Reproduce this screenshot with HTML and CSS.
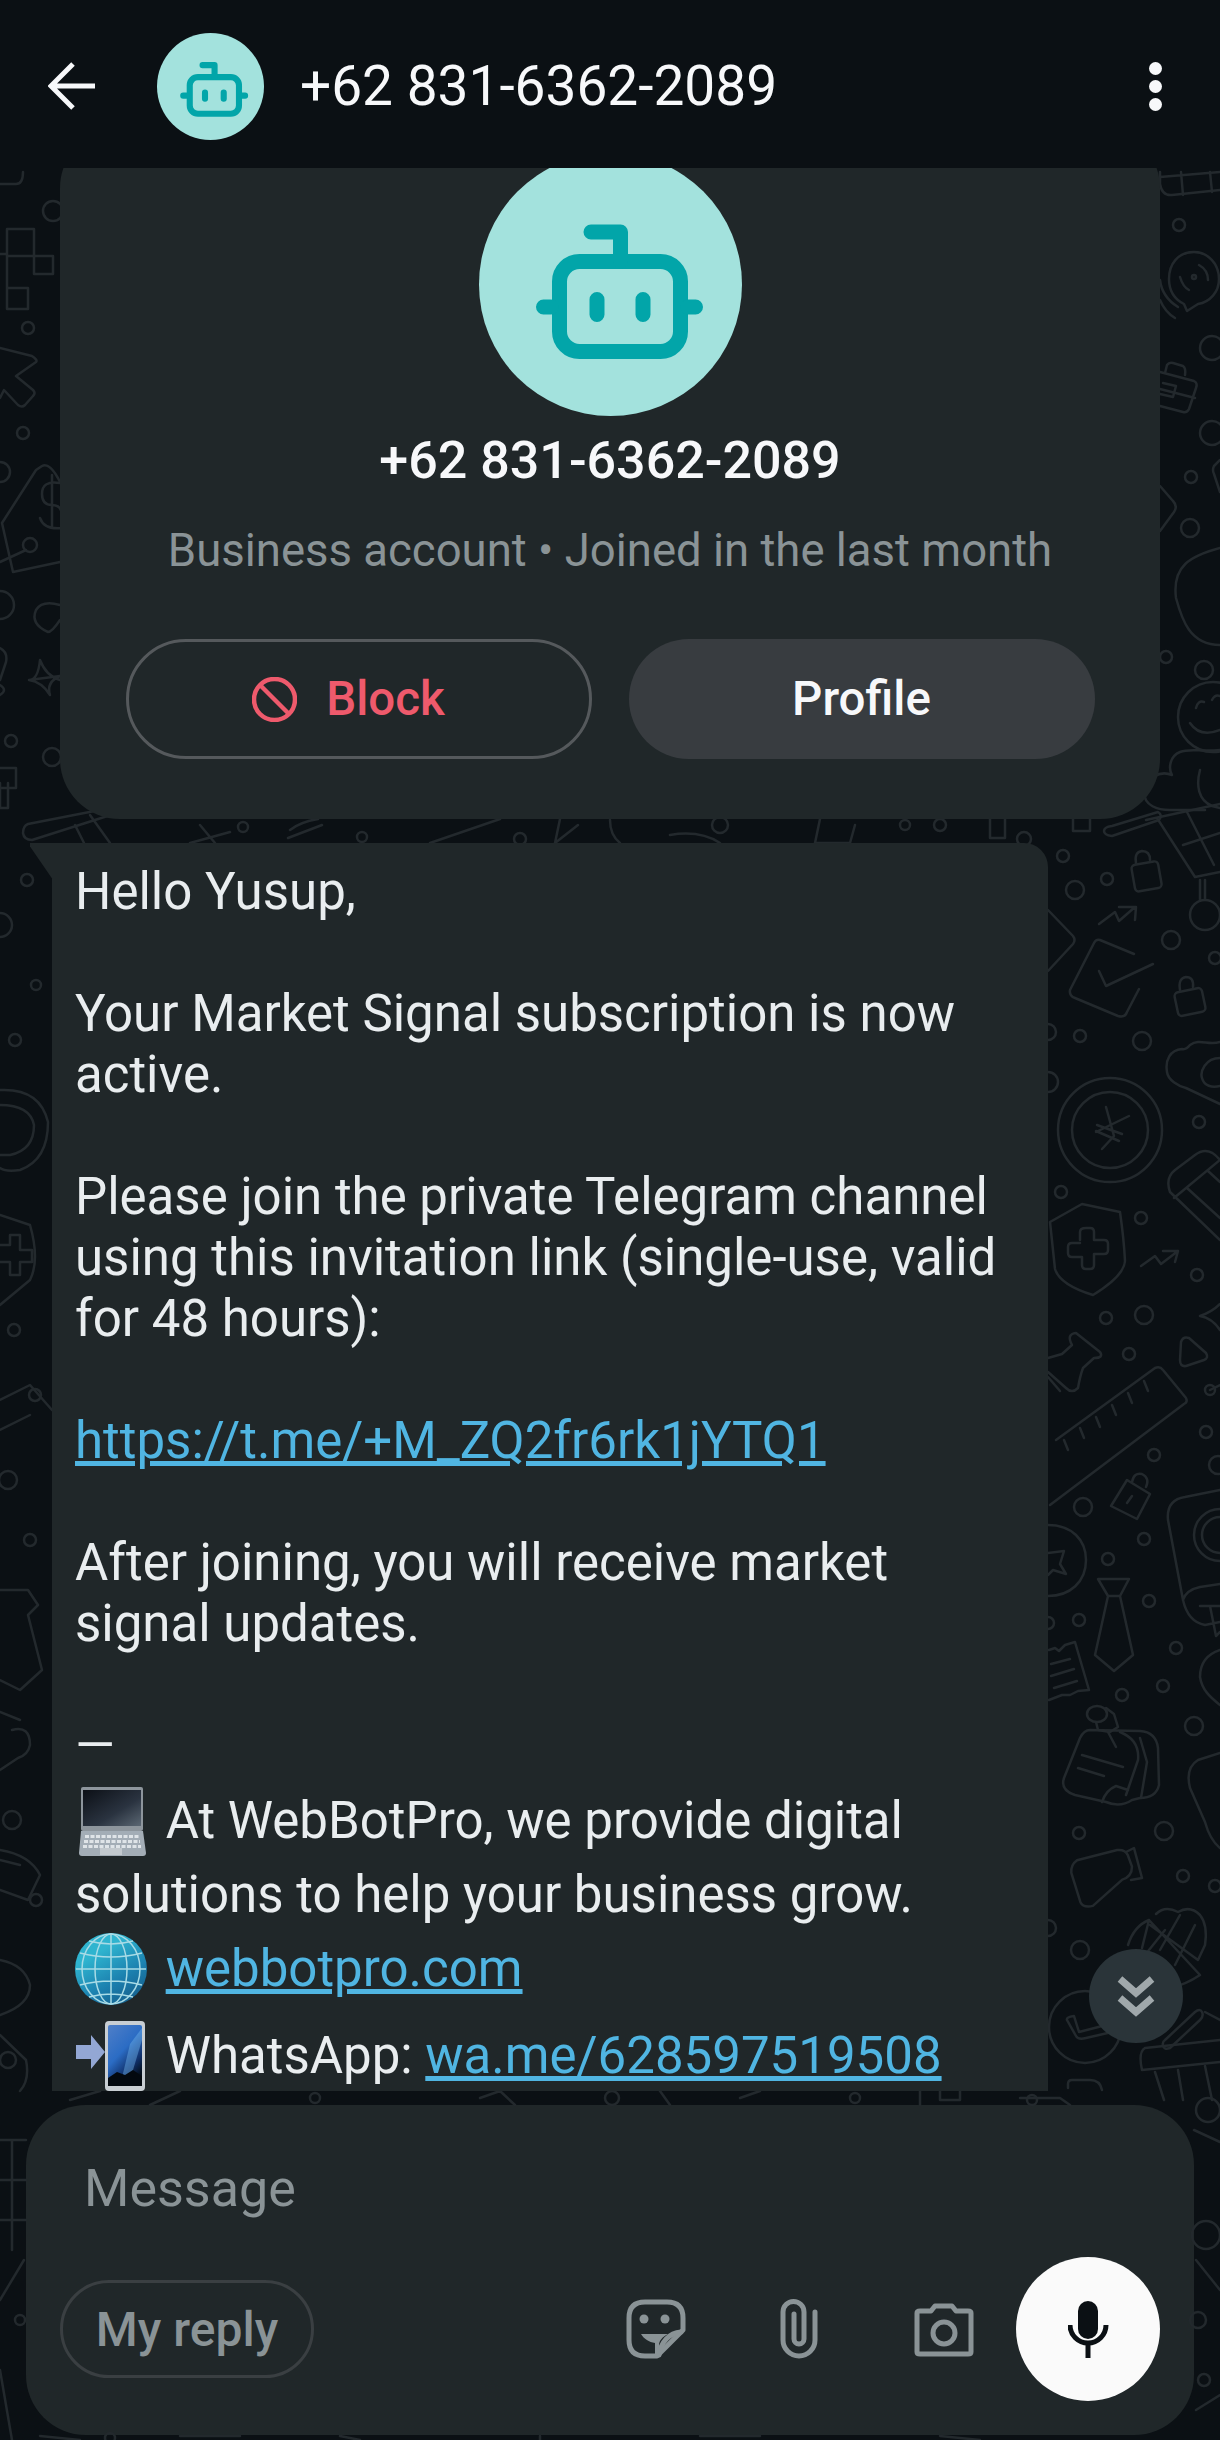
FILE: index.html
```html
<!DOCTYPE html>
<html>
<head>
	<title>Chat</title>
	<link rel="stylesheet" href="styles.css">
</head>
<body>
	<svg class="defs" width="0" height="0">
		<symbol id="robot" viewBox="0 0 263 263">
			<circle cx="131.5" cy="131.5" r="131.5" fill="#a3e2dd"/>
			<g fill="none" stroke="#02a5a9" stroke-width="15" stroke-linecap="round" stroke-linejoin="round">
				<rect x="80.5" y="108.5" width="121" height="90" rx="20"/>
				<path d="M112 79H141.5V108M64.5 154H72M209 154H216.5M118 146.5V161.5M164 146.5V161.5"/>
			</g>
		</symbol>
		<linearGradient id="globe-fill" x1="0.35" y1="0.25" x2="0.8" y2="1">
			<stop offset="0" stop-color="#2fb4cf"/>
			<stop offset="0.55" stop-color="#1b7fae"/>
			<stop offset="1" stop-color="#155d8a"/>
		</linearGradient>
		<linearGradient id="screen-fill" x1="0" y1="0" x2="1" y2="1">
			<stop offset="0" stop-color="#0c1016"/>
			<stop offset="0.6" stop-color="#2a3340"/>
			<stop offset="1" stop-color="#5b6773"/>
		</linearGradient>
		<linearGradient id="phone-fill" x1="0" y1="0" x2="0.6" y2="1">
			<stop offset="0" stop-color="#4f7fc8"/>
			<stop offset="0.5" stop-color="#2b6cc4"/>
			<stop offset="0.8" stop-color="#10306a"/>
			<stop offset="1" stop-color="#04101e"/>
		</linearGradient>
	</svg>

	<!-- wallpaper doodles -->
	<svg class="wallpaper" width="1220" height="2440" viewBox="0 0 1220 2440">
		<g class="dots">
			<circle cx="1179" cy="225" r="6"/><circle cx="1212" cy="348" r="12"/><circle cx="1212" cy="433" r="12"/>
			<circle cx="1191" cy="477" r="6"/><circle cx="1190" cy="528" r="9"/><circle cx="1166" cy="657" r="6"/>
			<circle cx="1204" cy="670" r="9"/><circle cx="1063" cy="856" r="6"/><circle cx="1107" cy="879" r="6"/>
			<circle cx="1075" cy="890" r="9"/><circle cx="1171" cy="940" r="9"/><circle cx="1215" cy="958" r="6"/>
			<circle cx="1080" cy="1036" r="6"/><circle cx="1142" cy="1041" r="9"/><circle cx="1048" cy="1032" r="8"/>
			<circle cx="1048" cy="1082" r="10"/><circle cx="1199" cy="1122" r="6"/><circle cx="1061" cy="1192" r="6"/>
			<circle cx="1141" cy="1218" r="6"/><circle cx="1197" cy="1275" r="6"/><circle cx="1106" cy="1318" r="6"/>
			<circle cx="1144" cy="1315" r="9"/><circle cx="1129" cy="1354" r="6"/><circle cx="1210" cy="1390" r="5"/>
			<circle cx="1206" cy="1432" r="6"/><circle cx="1154" cy="1455" r="6"/><circle cx="1083" cy="1507" r="9"/>
			<circle cx="1144" cy="1539" r="6"/><circle cx="1108" cy="1559" r="6"/><circle cx="1149" cy="1601" r="6"/>
			<circle cx="1079" cy="1620" r="6"/><circle cx="1048" cy="1623" r="6"/><circle cx="1176" cy="1648" r="6"/>
			<circle cx="1163" cy="1686" r="6"/><circle cx="1122" cy="1695" r="6"/><circle cx="1194" cy="1726" r="9"/>
			<circle cx="1079" cy="1833" r="6"/><circle cx="1164" cy="1831" r="9"/><circle cx="1183" cy="1876" r="6"/>
			<circle cx="1215" cy="1886" r="6"/><circle cx="1080" cy="1950" r="9"/><circle cx="1218" cy="1465" r="9"/>
			<circle cx="1048" cy="1928" r="8"/>
			<circle cx="28" cy="328" r="6"/><circle cx="23" cy="433" r="6"/><circle cx="0" cy="472" r="10"/>
			<circle cx="30" cy="545" r="7"/><circle cx="0" cy="605" r="14"/><circle cx="11" cy="741" r="6"/>
			<circle cx="52" cy="757" r="9"/><circle cx="53" cy="211" r="10"/><circle cx="27" cy="880" r="6"/>
			<circle cx="0" cy="925" r="12"/><circle cx="36" cy="985" r="5"/><circle cx="15" cy="1040" r="6"/>
			<circle cx="14" cy="1330" r="6"/><circle cx="35" cy="1395" r="6"/><circle cx="8" cy="1480" r="9"/>
			<circle cx="30" cy="1540" r="6"/><circle cx="12" cy="1820" r="9"/><circle cx="36" cy="1900" r="6"/>
			<circle cx="8" cy="2060" r="8"/><circle cx="243" cy="827" r="5"/><circle cx="362" cy="837" r="5"/>
			<circle cx="520" cy="839" r="6"/><circle cx="905" cy="825" r="5"/><circle cx="940" cy="825" r="6"/>
			<circle cx="720" cy="825" r="8"/><circle cx="1024" cy="839" r="7"/><circle cx="315" cy="2098" r="5"/>
			<circle cx="612" cy="2098" r="7"/><circle cx="855" cy="2098" r="5"/><circle cx="1032" cy="2100" r="5"/>
			<circle cx="20" cy="2320" r="5"/><circle cx="1208" cy="2110" r="12"/><circle cx="1198" cy="2320" r="8"/>
			<circle cx="1206" cy="2235" r="14"/><circle cx="1204" cy="2380" r="6"/><circle cx="110" cy="2438" r="5"/>
		</g>
		<g class="lines">
			<!-- right side, top -->
			<path d="M1160 172V184Q1162 196 1172 195L1220 190M1160 177L1220 172M1181 172L1183 195M1210 172L1212 192"/>
			<path d="M1194 252C1178 252 1169 264 1169 279C1169 292 1176 300 1184 304L1187 311L1198 304C1210 302 1219 292 1219 279C1219 264 1208 252 1194 252Z"/>
			<path d="M1180 277Q1183 287 1189 290M1199 265Q1208 270 1208 280"/><circle cx="1194" cy="277" r="2"/>
			<path d="M1160 280Q1162 297 1178 307M1160 300Q1165 312 1175 318"/>
			<path d="M1160 372L1194 381Q1198 383 1196 388L1189 409Q1187 413 1183 412L1160 406M1165 373L1167 365Q1169 362 1173 363L1183 366Q1186 368 1185 375M1160 389L1195 398"/>
			<path d="M1163 383L1176 386L1173 397L1160 394"/>
			<path d="M1160 486L1173 501Q1178 506 1174 512L1160 531"/>
			<path d="M1220 460L1214 466Q1212 470 1214 474L1220 492"/>
			<path d="M1220 548C1190 556 1172 566 1176 598C1182 620 1190 645 1220 645"/>
			<circle cx="1213" cy="717" r="35"/>
			<path d="M1190 723Q1200 738 1220 730M1196 708Q1198 700 1204 702M1212 700Q1215 694 1220 696"/>
			<path d="M1220 750C1200 752 1190 748 1180 752C1170 756 1168 768 1172 775C1160 770 1145 778 1144 792C1144 806 1158 810 1170 810H1205M1200 770C1196 785 1198 800 1212 806L1220 808"/>
			<!-- cart and capsule -->
			<path d="M1112 826L1158 812Q1163 815 1159 820L1112 836Q1104 835 1104 831Q1104 827 1112 826Z"/>
			<path d="M1157 818L1195 877L1220 872M1183 845L1220 833M1187 812L1214 865M1146 820L1220 804"/>
			<path d="M1200 880V900M1205 880V900"/><circle cx="1205" cy="915" r="15"/>
			<path d="M1073 818V831H1090V818"/>
			<rect x="1133" y="863" width="27" height="27" rx="4" transform="rotate(-10 1146 876)"/>
			<path d="M1136 863Q1134 852 1142 851Q1150 851 1150 860"/>
			<path d="M1099 924L1115 912L1119 921L1135 907M1119 907H1136L1135 920"/>
			<path d="M1134 954L1100 940Q1096 939 1094 943L1070 990Q1069 996 1075 998L1118 1016Q1125 1018 1127 1012L1139 989"/>
			<path d="M1099 971L1106 986L1153 964"/>
			<path d="M1048 910L1073 936Q1076 940 1073 944L1048 971"/>
			<rect x="1176" y="990" width="28" height="24" rx="4" transform="rotate(-12 1190 1002)"/>
			<path d="M1180 990Q1178 978 1186 977Q1194 977 1193 987"/>
			<path d="M1220 1042C1208 1046 1200 1038 1190 1045Q1186 1050 1182 1049C1170 1050 1165 1060 1167 1072C1168 1080 1178 1086 1186 1088L1220 1104"/>
			<path d="M1220 1058C1205 1058 1200 1072 1202 1078C1204 1086 1212 1088 1220 1086"/>
			<circle cx="1110" cy="1130" r="52"/><circle cx="1110" cy="1130" r="38"/>
			<path d="M1106 1107L1114 1136L1102 1149M1129 1116L1096 1132M1097 1125L1122 1134M1096 1131L1119 1141"/>
			<path d="M1220 1160Q1208 1145 1195 1155L1175 1170Q1165 1178 1170 1192L1220 1240M1174 1198L1220 1160M1187 1188L1220 1218M1208 1171L1220 1182"/>
			<path d="M1050 1222L1082 1204L1120 1212Q1124 1240 1125 1261Q1124 1276 1093 1295Q1060 1285 1055 1269Z"/>
			<path d="M1080 1240V1232Q1080 1228 1086 1228H1090Q1094 1228 1094 1232V1240H1104Q1108 1240 1108 1244V1250Q1108 1254 1104 1254H1094V1265Q1094 1269 1090 1269H1086Q1082 1269 1082 1265V1257H1072Q1068 1257 1068 1253V1247Q1068 1243 1072 1243H1080"/>
			<path d="M1141 1266L1155 1256L1161 1264L1178 1251M1163 1251H1178L1175 1262"/>
			<path d="M1220 1304Q1212 1312 1200 1316Q1212 1318 1220 1330"/>
			<path d="M1181 1342Q1183 1336 1189 1338L1206 1353Q1209 1358 1204 1360L1186 1366Q1180 1367 1180 1360Z"/>
			<path d="M1210 1390L1220 1385"/>
			<path d="M1048 1358L1062 1354L1072 1345Q1066 1334 1076 1333L1100 1352Q1104 1358 1094 1358L1083 1368Q1080 1376 1078 1388Q1072 1394 1066 1388L1048 1372M1048 1377L1060 1391"/>
			<path d="M1056 1440L1155 1368Q1160 1366 1163 1370L1186 1398Q1188 1402 1184 1404L1050 1505M1064 1440L1068 1450M1080 1428L1084 1438M1096 1417L1100 1427M1112 1405L1116 1415M1128 1393L1132 1403M1144 1381L1148 1391"/>
			<!-- right side, lower -->
			<path d="M1111 1506L1127 1480L1150 1494L1137 1519Z"/><path d="M1132 1482Q1134 1472 1142 1474Q1150 1478 1146 1487M1127 1503L1132 1496"/>
			<path d="M1220 1490L1185 1497Q1166 1500 1168 1520L1183 1600Q1188 1622 1205 1625L1220 1622M1183 1600Q1186 1590 1200 1587L1220 1584M1200 1606H1220M1210 1606L1216 1636L1220 1632"/>
			<circle cx="1220" cy="1535" r="26"/><circle cx="1220" cy="1535" r="18"/>
			<path d="M1048 1525C1072 1525 1086 1540 1086 1560C1086 1582 1070 1596 1048 1596"/>
			<path d="M1048 1553L1064 1551L1060 1564L1066 1574L1053 1570L1048 1575"/>
			<path d="M1098 1579H1129L1120 1596H1108ZM1108 1596L1095 1655L1114 1671L1133 1655L1120 1596"/>
			<path d="M1049 1650L1055 1648L1059 1651L1065 1645L1075 1642L1089 1690L1078 1691L1070 1695L1062 1695L1049 1700M1051 1664L1070 1659M1051 1676L1074 1669M1054 1688L1077 1681"/>
			<path d="M1220 1650C1205 1655 1200 1665 1200 1677C1202 1690 1210 1697 1220 1705"/>
			<path d="M1220 1753L1198 1760Q1185 1768 1190 1788L1205 1822Q1210 1840 1220 1848"/>
			<path d="M1090 1730L1140 1731Q1156 1732 1158 1748L1159 1785Q1156 1798 1140 1798L1132 1800Q1120 1808 1106 1802L1075 1795Q1060 1790 1064 1778L1080 1738Q1084 1730 1090 1730Z"/>
			<path d="M1120 1732Q1140 1740 1138 1760L1126 1795M1140 1738L1147 1762L1141 1798M1082 1755L1123 1767M1078 1768L1104 1776M1102 1802Q1106 1790 1116 1786L1128 1790"/>
			<ellipse cx="1097" cy="1714" rx="10" ry="8"/><path d="M1096 1722L1098 1730L1110 1732L1118 1727L1114 1714L1106 1708"/>
			<path d="M1108 1732L1116 1747"/>
			<path d="M1079 1858L1120 1852Q1128 1852 1130 1858L1133 1870Q1132 1880 1122 1882L1090 1905Q1080 1906 1078 1900L1072 1870Q1072 1862 1079 1858Z" transform="rotate(-6 1100 1878)"/>
			<path d="M1126 1852L1134 1848L1142 1878L1131 1880"/>
			<path d="M1128 1945Q1134 1926 1149 1920L1200 1975Q1185 1985 1170 1988M1149 1920L1142 1948M1156 1914Q1165 1905 1178 1912Q1190 1905 1200 1915Q1208 1925 1205 1945L1198 1960L1150 1925M1165 1930L1145 1955M1180 1915L1160 1950M1195 1925L1175 1965"/>
			<circle cx="1085" cy="2027" r="36"/><path d="M1067 2020Q1066 2017 1074 2016L1079 2032L1110 2024M1067 2020L1076 2036Q1078 2040 1086 2038L1112 2032"/>
			<path d="M1165 2040L1195 2012Q1200 2008 1202 2012Q1204 2016 1200 2020L1170 2048Q1164 2050 1163 2046Q1162 2042 1165 2040ZM1205 2012L1220 2020"/>
			<path d="M1145 2048L1220 2040M1142 2070Q1138 2052 1145 2048M1142 2070L1220 2062M1155 2072L1164 2100M1178 2070L1183 2100M1205 2066L1212 2100"/>
			<path d="M1068 2088V2084Q1068 2080 1072 2080H1090Q1100 2080 1102 2090"/>
			<!-- left side, top -->
			<path d="M0 184H16Q23 184 23 172"/>
			<path d="M7 229H34V256H53V274H34V256H7ZM7 288H28V309H7ZM7 256V288M0 254H7"/>
			<path d="M0 348L32 356Q38 360 36 362L16 376L33 390Q36 393 33 396L25 405Q22 408 18 405L4 390L0 398"/>
			<path d="M60 482Q50 462 42 466L36 470L2 523L13 572L60 562"/>
			<path d="M60 483Q42 480 42 494Q42 505 52 505Q62 505 62 516M62 528Q44 530 40 518M52 475V528"/>
			<path d="M26 550L0 562"/>
			<path d="M60 620Q52 632 48 632Q30 624 36 610Q42 600 60 605"/>
			<path d="M29 680Q38 680 40 660Q46 676 60 680M60 676Q46 682 50 695Q42 682 29 680Z"/>
			<path d="M0 648Q8 652 6 662L0 680M0 685Q8 690 0 695"/>
			<path d="M0 768H16V788H0"/>
			<!-- band and capsule -->
			<path d="M28 824L110 808Q118 806 117 813L32 840Q24 840 23 833Q23 826 28 824ZM90 815L110 843M75 825L84 843"/>
			<path d="M0 783V808H8V783M230 832L190 843M200 825L215 843M290 830Q300 822 318 819M288 838L322 825"/>
			<path d="M430 843L500 819M560 819L555 843L578 825M610 820Q610 835 620 843M670 835Q700 830 720 843M820 819L815 843H850L855 825M990 819V838H1005V819"/>
			<path d="M1020 2098H1060L1070 2105M70 2100L100 2091M150 2105L180 2091M480 2098L500 2091L515 2105M660 2091L670 2105M740 2098L760 2091M920 2105V2091M940 2091V2100H960V2091"/>
			<!-- left side, lower -->
			<path d="M0 1090Q40 1088 48 1122Q48 1160 20 1170Q5 1172 0 1168M0 1105Q30 1105 34 1125Q34 1150 10 1155H0"/>
			<path d="M0 1215L30 1225Q40 1260 30 1280L0 1305M0 1245H10V1235H20V1250H32V1262H20V1275H10V1262H0"/>
			<path d="M0 1400L30 1385L52 1410M0 1430L30 1415"/>
			<path d="M0 1590H28L38 1605L28 1615L42 1670L20 1690L0 1680"/>
			<path d="M12 1730Q30 1725 30 1745Q28 1755 18 1758L0 1770M0 1712L20 1720"/>
			<path d="M0 1850Q30 1855 40 1875L28 1900L0 1890M0 1860L20 1865"/>
			<path d="M0 1960Q25 1965 30 1985Q30 2005 0 2015M0 2035L26 2060Q30 2080 20 2091"/>
			<!-- around the composer -->
			<path d="M0 2140H26M12 2140V2250M0 2180H26M0 2220H26M0 2300L24 2260M0 2370L12 2440"/>
			<path d="M1194 2130L1220 2142M1196 2260L1220 2290M1196 2410L1220 2395M40 2436L80 2440M180 2436H240M340 2436L360 2440M540 2436V2440M700 2436H760M940 2436L980 2440"/>
		</g>
	</svg>

	<div class="header">
		<svg class="back" viewBox="0 0 48 48">
			<path d="M2 24H47M25 2L3 24L25 46"/>
		</svg>
		<svg class="header-avatar"><use href="#robot"/></svg>
		<div class="header-name">+62 831-6362-2089</div>
		<div class="menu">
			<span></span>
			<span></span>
			<span></span>
		</div>
	</div>

	<div class="chat">
		<div class="card">
			<svg class="card-avatar"><use href="#robot"/></svg>
			<div class="card-name">+62 831-6362-2089</div>
			<div class="card-sub">Business account • Joined in the last month</div>
			<div class="card-buttons">
				<div class="btn btn-block">
					<svg width="45" height="45" viewBox="0 0 45 45">
						<circle cx="22.5" cy="22.5" r="20.5"/>
						<path d="M8 8L37 37"/>
					</svg>
					Block
				</div>
				<div class="btn btn-profile">Profile</div>
			</div>
		</div>

		<div class="bubble">
			<p>Hello Yusup,</p>
			<p>Your Market Signal subscription is now active.</p>
			<p>Please join the private Telegram channel using this invitation link (single-use, valid for 48 hours):</p>
			<p><a href="#">https://t.me/+M_ZQ2fr6rk1jYTQ1</a></p>
			<p>After joining, you will receive market signal updates.</p>
			<p>—</p>
			<div class="promo">
				<svg class="emoji" width="72" height="72" viewBox="0 0 72 72">
					<rect x="6" y="2" width="62" height="44" rx="2" fill="#8d959c"/>
					<rect x="8" y="5" width="58" height="36" fill="url(#screen-fill)"/>
					<path d="M6 46H68L71 68Q71 71 68 71H7Q4 71 4 68Z" fill="#a3adb6"/>
					<g fill="none" stroke="#dfe4e8" stroke-width="3" stroke-dasharray="4 1.5">
						<path d="M10 51.5H64M9 56.5H65M8 61.5H66"/>
					</g>
					<rect x="25" y="63" width="22" height="7" fill="#c3c9ce"/>
				</svg>
				At WebBotPro, we provide digital solutions to help your business grow.
			</div>
			<div class="promo">
				<svg class="emoji" width="72" height="72" viewBox="0 0 72 72">
					<circle cx="36" cy="36" r="36" fill="url(#globe-fill)"/>
					<g fill="none" stroke="#a8dbe6" stroke-width="1.5">
						<ellipse cx="36" cy="36" rx="16" ry="35"/>
						<ellipse cx="36" cy="36" rx="29" ry="35"/>
						<path d="M36 1V71M1 36H71M5 20Q36 28 67 20M5 52Q36 44 67 52M14 8Q36 14 58 8M14 64Q36 58 58 64"/>
					</g>
				</svg>
				<a href="#">webbotpro.com</a>
			</div>
			<div class="promo promo-last">
				<svg class="emoji" width="72" height="72" viewBox="0 0 72 72">
					<path d="M1 25H16V15L30 32L16 49V39H1Z" fill="#93a7d4"/>
					<rect x="30" y="1" width="40" height="70" rx="4" fill="#c8ced3"/>
					<rect x="33" y="5" width="34" height="61" rx="2" fill="url(#phone-fill)"/>
					<path d="M45 66L55 24L67 8V20L58 50L50 66Z" fill="#6fb2e8" opacity="0.45"/>
					<path d="M33 58L42 52L50 55L58 50L67 56V66H33Z" fill="#03090f"/>
				</svg>
				WhatsApp: <a href="#">wa.me/628597519508</a>
			</div>
		</div>
	</div>

	<div class="composer">
		<div class="composer-input">Message</div>
		<div class="composer-row">
			<div class="reply-chip">My reply</div>
			<div class="composer-icons">
				<svg class="icon icon-sticker" viewBox="0 0 60 60">
					<path d="M19 3H41Q57 3 57 19V31L31 57H19Q3 57 3 41V19Q3 3 19 3Z"/>
					<circle class="solid" cx="18" cy="20" r="4.5"/>
					<circle class="solid" cx="39" cy="20" r="4.5"/>
					<path class="solid" d="M15 35L42 35C36 38 33 42 33 46V56H29V44C23 43 18 40 15 35Z"/>
					<path d="M55 33C43 34 35 43 33 56"/>
				</svg>
				<svg class="icon icon-clip" viewBox="0 0 38 60">
					<path d="M35 13V41A16 16 0 0 1 3 41V13A10.5 10.5 0 0 1 24 13V40A5 5 0 0 1 14 40V15"/>
				</svg>
				<svg class="icon icon-camera" viewBox="0 0 60 55">
					<path d="M3 11Q3 9 6 9H17L21 4H38L42 9H54Q57 9 57 11V50Q57 52 54 52H6Q3 52 3 50Z"/>
					<circle cx="30" cy="31" r="11"/>
				</svg>
				<div class="mic">
					<svg width="41" height="57" viewBox="0 0 41 57">
						<rect x="10" y="0" width="20" height="38" rx="10"/>
						<path d="M2 24A18 18 0 0 0 38 24" fill="none" stroke="#0b1014" stroke-width="5"/>
						<rect x="17.5" y="40" width="5" height="17"/>
					</svg>
				</div>
			</div>
		</div>
	</div>

	<div class="scroll-down">
		<svg width="40" height="42" viewBox="0 0 40 42">
			<path d="M4 4L20 18L36 4M4 23L20 37L36 23"/>
		</svg>
	</div>
</body>
</html>
```

FILE: styles.css
```css
* {
	box-sizing: border-box;
}

html,
body {
	margin: 0;
	height: 2440px;
	overflow: hidden;
}

body {
	position: relative;
	background-color: #0b1014;
	font-family: Roboto, "Noto Sans", sans-serif;
	color: #e9edef;
}

.defs {
	position: absolute;
}

.wallpaper {
	position: absolute;
	top: 0;
	left: 0;
}

.wallpaper g {
	fill: none;
	stroke: #23292d;
	stroke-width: 2.5;
	stroke-linecap: round;
	stroke-linejoin: round;
}

/* header */

.header {
	position: relative;
	display: flex;
	align-items: center;
	height: 168px;
	padding: 4px 58px 0 48px;
	background-color: #0b1014;
}

.back {
	width: 48px;
	height: 48px;
	fill: none;
	stroke: #f7f8fa;
	stroke-width: 5;
}

.header-avatar {
	width: 107px;
	height: 107px;
	margin-left: 61px;
}

.header-name {
	flex: 1;
	margin-left: 36px;
	font-size: 55px;
	color: #f7f8fa;
}

.menu {
	display: flex;
	flex-direction: column;
	gap: 5px;
}

.menu span {
	width: 13px;
	height: 13px;
	border-radius: 50%;
	background-color: #f7f8fa;
}

/* chat area */

.chat {
	position: relative;
	height: 1923px;
	overflow: hidden;
}

.card {
	display: flex;
	flex-direction: column;
	align-items: center;
	width: 1100px;
	height: 691px;
	margin: -40px 0 24px 60px;
	padding-top: 25px;
	border-radius: 60px;
	background-color: #202729;
}

.card-avatar {
	width: 263px;
	height: 263px;
}

.card-name {
	margin-top: 13px;
	font-size: 52px;
	line-height: 64px;
	font-weight: 500;
	color: #f7f8fa;
}

.card-sub {
	margin-top: 32px;
	font-size: 45.5px;
	line-height: 52px;
	color: #8a9396;
}

.card-buttons {
	display: flex;
	gap: 37px;
	margin-top: 62px;
}

.btn {
	display: flex;
	justify-content: center;
	align-items: center;
	gap: 29px;
	width: 466px;
	height: 120px;
	border-radius: 60px;
	font-size: 47.5px;
	font-weight: 500;
}

.btn-block {
	padding-right: 20px;
	border: 3px solid #55595c;
	color: #ee5a6c;
}

.btn-block svg {
	fill: none;
	stroke: #ee5a6c;
	stroke-width: 4.5;
}

.btn-profile {
	background-color: #383c40;
	color: #f7f8fa;
}

.bubble {
	position: relative;
	width: 996px;
	height: 1300px;
	margin-left: 52px;
	padding: 18px 23px;
	border-radius: 0 24px 0 0;
	background-color: #202729;
	font-size: 51px;
	line-height: 61px;
}

.bubble::before {
	content: "";
	position: absolute;
	top: 0;
	left: -22px;
	width: 28px;
	height: 36px;
	background-color: #202729;
	clip-path: polygon(0 0, 100% 0, 100% 100%, 80% 100%, 0 10%);
}

.bubble p {
	margin: 0 0 61px;
}

.bubble p:nth-of-type(6) {
	margin-bottom: 8px;
}

.bubble a {
	color: #50b5e2;
}

.promo {
	line-height: 74px;
}

.promo-last {
	margin-top: 13px;
}

.emoji {
	margin-right: 6px;
	vertical-align: -19px;
}

/* composer */

.composer {
	height: 330px;
	margin: 14px 26px 0;
	padding: 54px 34px 0;
	border-radius: 60px;
	background-color: #202729;
}

.composer-input {
	padding-left: 24px;
	font-size: 52px;
	line-height: 60px;
	color: #8a9396;
}

.composer-row {
	display: flex;
	justify-content: space-between;
	align-items: center;
	margin-top: 38px;
}

.reply-chip {
	display: flex;
	align-items: center;
	justify-content: center;
	width: 254px;
	height: 98px;
	border: 3px solid #3a3f42;
	border-radius: 49px;
	font-size: 48px;
	font-weight: 500;
	color: #8a9396;
}

.composer-icons {
	display: flex;
	align-items: center;
}

.icon {
	fill: none;
	stroke: #8a9396;
	stroke-width: 5;
	stroke-linejoin: round;
	stroke-linecap: round;
}

.icon .solid {
	fill: #8a9396;
	stroke: none;
}

.icon-sticker {
	width: 60px;
	height: 60px;
}

.icon-clip {
	width: 38px;
	height: 60px;
	margin-left: 94px;
}

.icon-camera {
	width: 60px;
	height: 55px;
	margin-left: 96px;
}

.mic {
	display: flex;
	align-items: center;
	justify-content: center;
	width: 144px;
	height: 144px;
	margin-left: 42px;
	border-radius: 50%;
	background-color: #fafafa;
	fill: #0b1014;
}

/* floating button */

.scroll-down {
	position: absolute;
	top: 1949px;
	left: 1089px;
	display: flex;
	align-items: center;
	justify-content: center;
	width: 94px;
	height: 94px;
	border-radius: 50%;
	background-color: #2a3439;
}

.scroll-down svg {
	fill: none;
	stroke: #a0a8ab;
	stroke-width: 7;
}
```
